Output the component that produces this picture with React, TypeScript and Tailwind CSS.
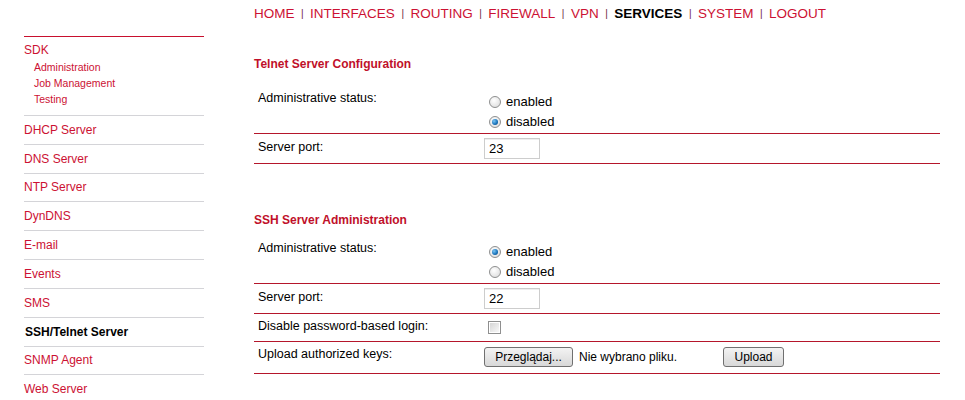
import type { PropsWithChildren, ReactNode } from "react";

const font = "font-['Liberation_Sans',Arial,sans-serif]";

/* ─── Top navigation ─── */

const navItems = ["HOME", "INTERFACES", "ROUTING", "FIREWALL", "VPN", "SERVICES", "SYSTEM", "LOGOUT"];

function TopNav() {
  return (
    <nav className="flex h-[28px] items-center text-[13.5px] leading-none">
      {navItems.map((item, i) => (
        <span key={item} className="flex items-center">
          {i > 0 && <span className="mx-[6.5px] text-[10px] text-[#6d2340]">|</span>}
          <span className={item === "SERVICES" ? "font-bold text-black" : "text-[#cc1133]"}>{item}</span>
        </span>
      ))}
    </nav>
  );
}

/* ─── Sidebar ─── */

const sideItems = [
  { label: "DHCP Server", h: "h-[29px] leading-[28px]" },
  { label: "DNS Server", h: "h-[29px] leading-[28px]" },
  { label: "NTP Server", h: "h-[28px] leading-[27px]" },
  { label: "DynDNS", h: "h-[29px] leading-[28px]" },
  { label: "E-mail", h: "h-[29px] leading-[28px]" },
  { label: "Events", h: "h-[29px] leading-[28px]" },
  { label: "SMS", h: "h-[29px] leading-[28px]" },
  { label: "SSH/Telnet Server", h: "h-[29px] leading-[28px]", active: true },
  { label: "SNMP Agent", h: "h-[28px] leading-[27px]" },
  { label: "Web Server", h: "h-[29px] leading-[28px]" },
];

function Sidebar() {
  return (
    <aside className="w-[204px] shrink-0 pl-6 pt-9">
      <div className="border-t border-[#c8102e] pb-2 pt-[5px]">
        <div className="h-4 text-[12px] leading-4 text-[#cc1133]">SDK</div>
        <div className="mt-px pl-[10px] text-[10.5px] text-[#cc1133]">
          <div className="h-4 leading-4">Administration</div>
          <div className="h-4 leading-4">Job Management</div>
          <div className="h-4 leading-4">Testing</div>
        </div>
      </div>
      {sideItems.map((item) => (
        <div
          key={item.label}
          className={
            item.active
              ? `${item.h} border-t border-[#d4d4d8] pl-px text-[12px] font-bold text-black`
              : `${item.h} border-t border-[#d4d4d8] text-[12px] text-[#cc1133]`
          }
        >
          {item.label}
        </div>
      ))}
    </aside>
  );
}

/* ─── Form controls ─── */

function Radio({ checked, label }: { checked?: boolean; label: string }) {
  return (
    <div className="flex h-5 items-center gap-[5px]">
      <span className="flex h-[12px] w-[12px] items-center justify-center rounded-full border border-[#8e8f8f] bg-[radial-gradient(circle_at_40%_35%,#ffffff,#d8d8d8)]">
        {checked && (
          <span className="h-[6px] w-[6px] rounded-full bg-[radial-gradient(circle_at_35%_35%,#7cc6f5,#1570b8_60%,#0a3f73)]" />
        )}
      </span>
      <span className="text-[13px] text-black">{label}</span>
    </div>
  );
}

function TextInput({ value }: { value: string }) {
  return (
    <div className="flex h-[21px] w-[56px] items-center border border-[#cdcdcd] pl-[4px] text-[13px] text-black shadow-[inset_0_1px_0_#eeeeee]">
      {value}
    </div>
  );
}

function Checkbox() {
  return (
    <span className="block h-[13px] w-[13px] border border-[#8f8f8f] bg-white p-px">
      <span className="block h-full w-full bg-gradient-to-br from-[#d6d6d6] to-[#f8f8f8]" />
    </span>
  );
}

function Button({ children, className }: PropsWithChildren<{ className?: string }>) {
  return (
    <span
      className={`flex h-5 items-center justify-center rounded-[3px] border border-[#707070] bg-gradient-to-b from-[#f3f3f3] to-[#d8d8d8] text-[12px] text-black ${className ?? ""}`}
    >
      {children}
    </span>
  );
}

/* ─── Settings table ─── */

function Row({
  label,
  height,
  labelTop,
  valueTop,
  children,
}: {
  label: string;
  height: string;
  labelTop: string;
  valueTop: string;
  children: ReactNode;
}) {
  return (
    <div className={`flex border-b border-[#b5162b] ${height}`}>
      <div className={`w-[230px] shrink-0 pl-1 text-[12.5px] leading-[14px] text-black ${labelTop}`}>{label}</div>
      <div className={`flex-1 ${valueTop}`}>{children}</div>
    </div>
  );
}

function SectionTitle({ children, className }: PropsWithChildren<{ className?: string }>) {
  return (
    <h2 className={`h-[14px] text-[12px] font-bold leading-[14px] text-[#c0102a] ${className ?? ""}`}>{children}</h2>
  );
}

export default function App() {
  return (
    <div className={`flex h-[400px] w-[965px] overflow-hidden bg-white ${font}`}>
      <Sidebar />
      <main className="ml-[50px] w-[686px]">
        <TopNav />

        <SectionTitle className="mt-[29px]">Telnet Server Configuration</SectionTitle>
        <div className="mt-[13px]">
          <Row label="Administrative status:" height="h-[50px]" labelTop="pt-[7px]" valueTop="pt-[8px] pl-[5px]">
            <Radio label="enabled" />
            <Radio label="disabled" checked />
          </Row>
          <Row label="Server port:" height="h-[30px]" labelTop="pt-[6px]" valueTop="pt-[4px]">
            <TextInput value="23" />
          </Row>
        </div>

        <SectionTitle className="mt-[49px]">SSH Server Administration</SectionTitle>
        <div className="mt-[7px]">
          <Row label="Administrative status:" height="h-[50px]" labelTop="pt-[7px]" valueTop="pt-[8px] pl-[5px]">
            <Radio label="enabled" checked />
            <Radio label="disabled" />
          </Row>
          <Row label="Server port:" height="h-[30px]" labelTop="pt-[6px]" valueTop="pt-[4px]">
            <TextInput value="22" />
          </Row>
          <Row label="Disable password-based login:" height="h-[28px]" labelTop="pt-[5px]" valueTop="pt-[7px] pl-[4px]">
            <Checkbox />
          </Row>
          <Row label="Upload authorized keys:" height="h-[32px]" labelTop="pt-[5px]" valueTop="pt-[5px]">
            <div className="flex items-center">
              <Button className="w-[89px]">Przeglądaj...</Button>
              <span className="ml-[6px] w-[144px] text-[12px] text-black">Nie wybrano pliku.</span>
              <Button className="w-[61px]">Upload</Button>
            </div>
          </Row>
        </div>
      </main>
    </div>
  );
}
